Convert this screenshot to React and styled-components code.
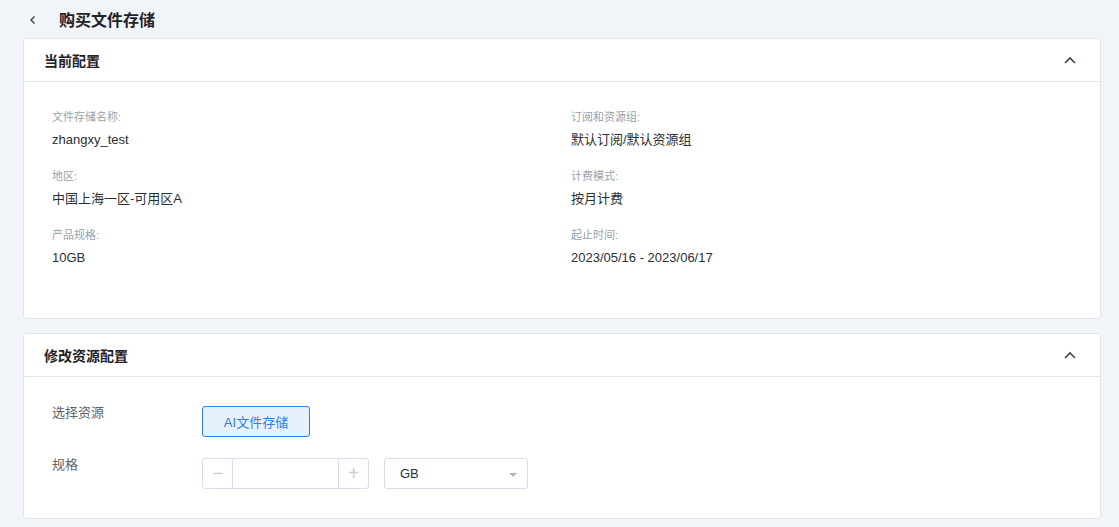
import styled, { createGlobalStyle } from "styled-components"

const GlobalStyle = createGlobalStyle`
    body {
        margin: 0;
        background: #f1f4f8;
        font-family: "Liberation Sans", Arial, "Noto Sans CJK SC", sans-serif;
        color: #2a2f36;
    }
`

const Page = styled.div`
    padding: 0 18px 0 23px;
    width: 1119px;
    box-sizing: border-box;
`

const TopBar = styled.div`
    display: flex;
    align-items: center;
    height: 38px;
    padding-left: 5px;
`

const BackIcon = styled.svg`
    width: 10px;
    height: 10px;
    margin-right: 21px;
    margin-top: 1px;
`

const PageTitle = styled.h1`
    margin: 0;
    font-size: 16px;
    font-weight: bold;
    color: #1f2329;
`

const Card = styled.section`
    background: #fff;
    border: 1px solid #e2e6ec;
    border-radius: 3px;
    margin-bottom: 14px;
`

const CardHead = styled.div`
    display: flex;
    align-items: center;
    justify-content: space-between;
    height: 42px;
    padding: 0 24px 0 20px;
    border-bottom: 1px solid #e2e6ec;
`

const CardTitle = styled.h2`
    margin: 0;
    font-size: 14px;
    font-weight: bold;
    color: #1f2329;
`

const Chevron = styled.svg`
    width: 12px;
    height: 8px;
`

const InfoGrid = styled.div`
    display: grid;
    grid-template-columns: 519px 1fr;
    padding: 28px 28px 51px;
    row-gap: 20px;
`

const InfoItem = styled.div`
    display: flex;
    flex-direction: column;
    gap: 7px;
`

const Label = styled.div`
    font-size: 11px;
    color: #9aa1ab;
    line-height: 14px;
`

const Value = styled.div`
    font-size: 13px;
    color: #2a2f36;
    line-height: 18px;
`

const FormBody = styled.div`
    padding: 27px 28px 29px;
    display: flex;
    flex-direction: column;
    gap: 19px;
`

const FormRow = styled.div`
    display: flex;
    align-items: flex-start;
`

const FormLabel = styled.div`
    width: 150px;
    font-size: 13px;
    color: #5c6470;
    line-height: 18px;
`

const Choice = styled.button`
    width: 108px;
    height: 31px;
    margin-top: 2px;
    border: 1px solid #2b7de9;
    border-radius: 3px;
    background: #e7f1fe;
    color: #2b7de9;
    font-size: 13px;
    font-family: inherit;
    padding: 0;
`

const Controls = styled.div`
    display: flex;
    gap: 15px;
    margin-top: 2px;
`

const Stepper = styled.div`
    display: flex;
    width: 167px;
    height: 31px;
    box-sizing: border-box;
    border: 1px solid #d6deea;
    border-radius: 3px;
`

const StepBtn = styled.div`
    width: 29px;
    display: flex;
    align-items: center;
    justify-content: center;
    color: #c8cfd9;
    font-size: 20px;
    border-${p => (p.$side === "left" ? "right" : "left")}: 1px solid #d6deea;
`

const StepInput = styled.div`
    flex: 1;
`

const Select = styled.div`
    width: 144px;
    height: 31px;
    box-sizing: border-box;
    border: 1px solid #d6deea;
    border-radius: 3px;
    display: flex;
    align-items: center;
    justify-content: space-between;
    padding: 0 10px 0 15px;
    font-size: 13px;
    color: #2a2f36;
`

const Caret = styled.span`
    width: 0;
    height: 0;
    border-left: 4px solid transparent;
    border-right: 4px solid transparent;
    border-top: 4px solid #b0b7c2;
    margin-top: 3px;
`

const UpIcon = () => (
    <Chevron viewBox="0 0 12 8">
        <path d="M1 7 L6 2 L11 7" fill="none" stroke="#3d4450" strokeWidth="1.6" />
    </Chevron>
)

const info = [
    ["文件存储名称:", "zhangxy_test", "订阅和资源组:", "默认订阅/默认资源组"],
    ["地区:", "中国上海一区-可用区A", "计费模式:", "按月计费"],
    ["产品规格:", "10GB", "起止时间:", "2023/05/16 - 2023/06/17"],
]

function App() {
    return (
        <Page>
            <GlobalStyle />
            <TopBar>
                <BackIcon viewBox="0 0 10 10">
                    <path d="M6.5 1.5 L3 5 L6.5 8.5" fill="none" stroke="#4a5260" strokeWidth="1.6" />
                </BackIcon>
                <PageTitle>购买文件存储</PageTitle>
            </TopBar>
            <Card>
                <CardHead>
                    <CardTitle>当前配置</CardTitle>
                    <UpIcon />
                </CardHead>
                <InfoGrid>
                    {info.flatMap(row => [
                        <InfoItem key={row[0]}>
                            <Label>{row[0]}</Label>
                            <Value>{row[1]}</Value>
                        </InfoItem>,
                        <InfoItem key={row[2]}>
                            <Label>{row[2]}</Label>
                            <Value>{row[3]}</Value>
                        </InfoItem>,
                    ])}
                </InfoGrid>
            </Card>
            <Card>
                <CardHead>
                    <CardTitle>修改资源配置</CardTitle>
                    <UpIcon />
                </CardHead>
                <FormBody>
                    <FormRow>
                        <FormLabel>选择资源</FormLabel>
                        <Choice>AI文件存储</Choice>
                    </FormRow>
                    <FormRow>
                        <FormLabel>规格</FormLabel>
                        <Controls>
                            <Stepper>
                                <StepBtn $side="left">−</StepBtn>
                                <StepInput />
                                <StepBtn $side="right">+</StepBtn>
                            </Stepper>
                            <Select>
                                GB
                                <Caret />
                            </Select>
                        </Controls>
                    </FormRow>
                </FormBody>
            </Card>
        </Page>
    )
}

export default App
